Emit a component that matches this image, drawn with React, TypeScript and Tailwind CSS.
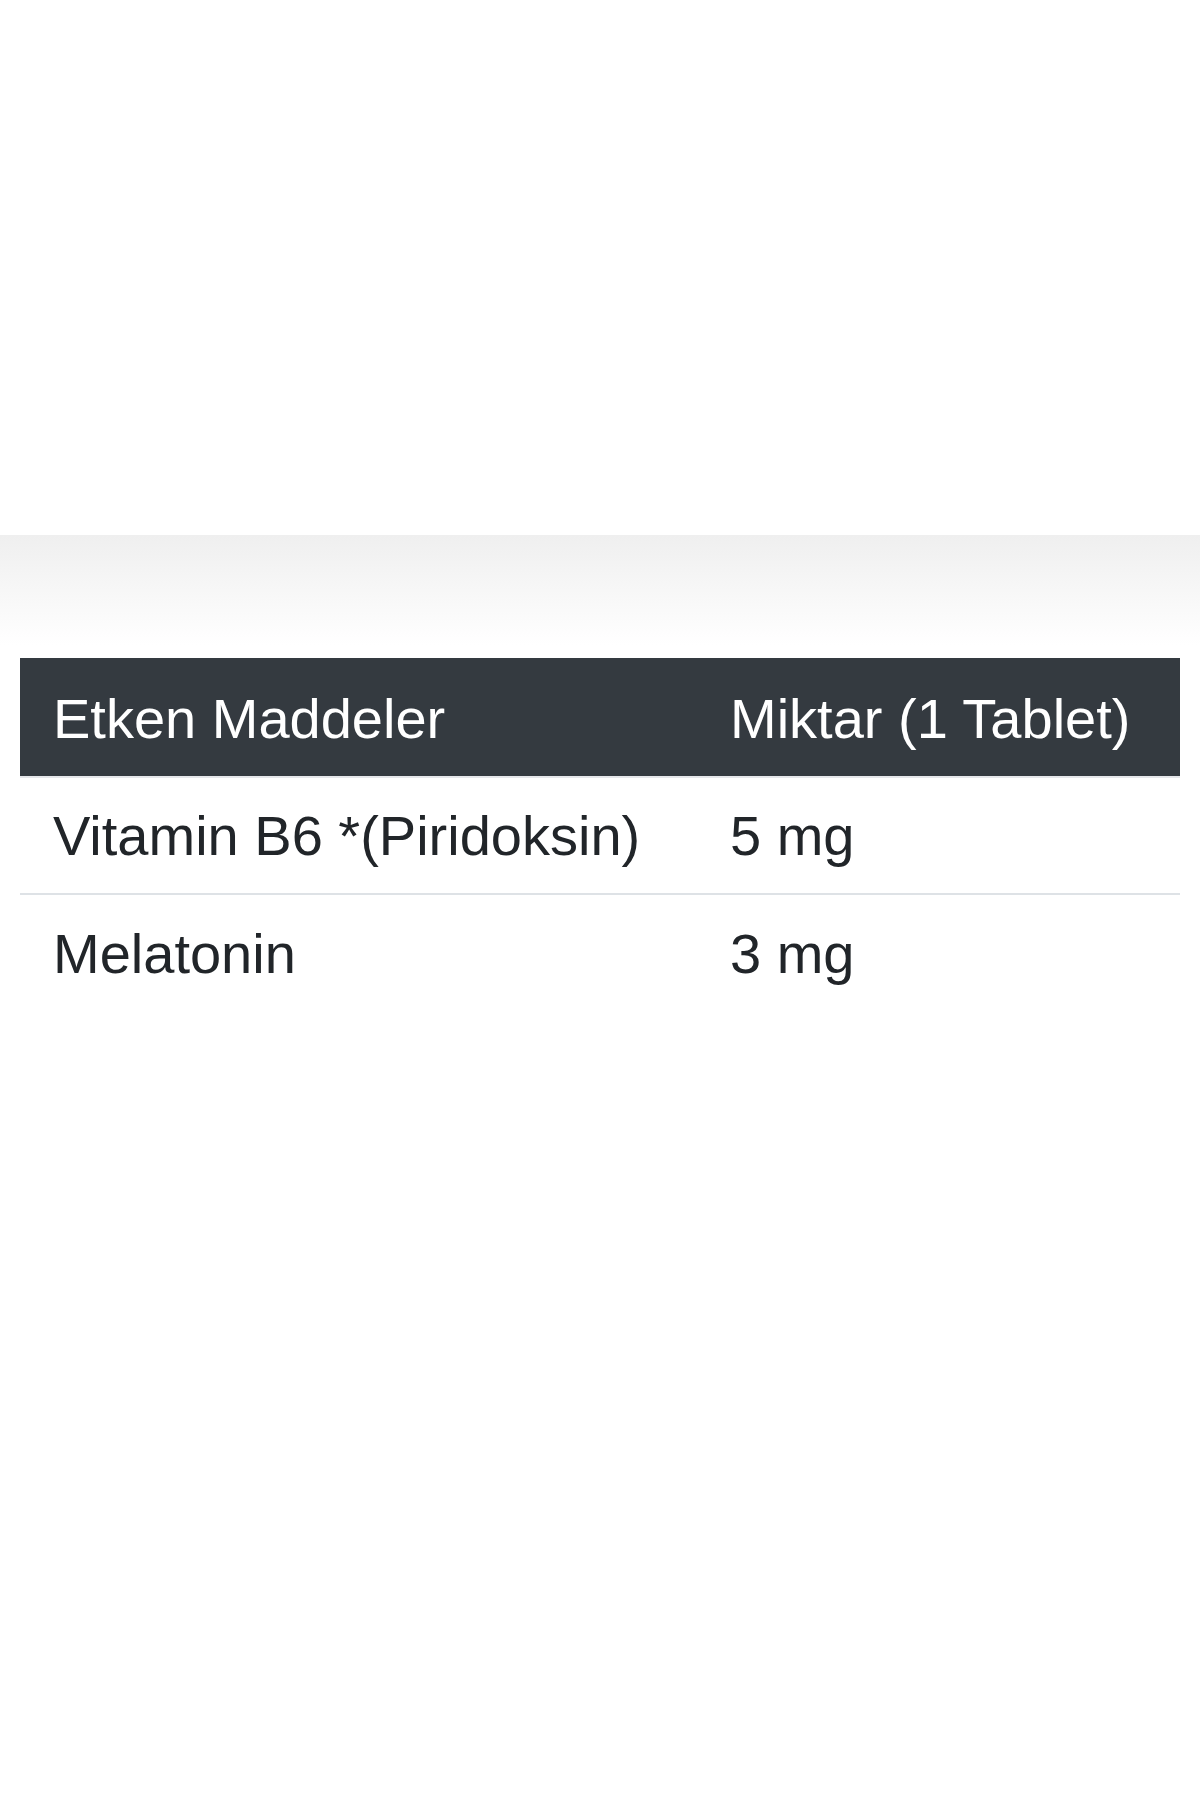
export default function App() {
  const rows = [
    { name: "Vitamin B6 *(Piridoksin)", amount: "5 mg" },
    { name: "Melatonin", amount: "3 mg" },
  ];

  return (
    <div
      className="w-[1200px] h-[1800px] bg-white flex flex-col"
      style={{ fontFamily: '"Liberation Sans", Arial, sans-serif' }}
    >
      <div className="h-[535px] shrink-0" />
      {/* soft gray fade above the table */}
      <div className="h-[110px] shrink-0 bg-gradient-to-b from-[#efefef] to-white" />
      <div className="h-[13px] shrink-0" />

      <div className="ml-[20px] w-[1160px]">
        <div className="flex h-[120px] items-center bg-[#343a40] text-white text-[56px] leading-none border-b-2 border-[#e5e7ea]">
          <div className="w-[676px] pl-[33px] pt-[4px]">Etken Maddeler</div>
          <div className="flex-1 pl-[34px] pt-[4px]">Miktar (1 Tablet)</div>
        </div>
        {rows.map((row, i) => (
          <div
            key={row.name}
            className={
              i < rows.length - 1
                ? "flex h-[117px] items-center text-[#212529] text-[56px] leading-none border-b-2 border-[#dee2e6]"
                : "flex h-[117px] items-center text-[#212529] text-[56px] leading-none"
            }
          >
            <div className="w-[676px] pl-[33px]">{row.name}</div>
            <div className="flex-1 pl-[34px]">{row.amount}</div>
          </div>
        ))}
      </div>
    </div>
  );
}
